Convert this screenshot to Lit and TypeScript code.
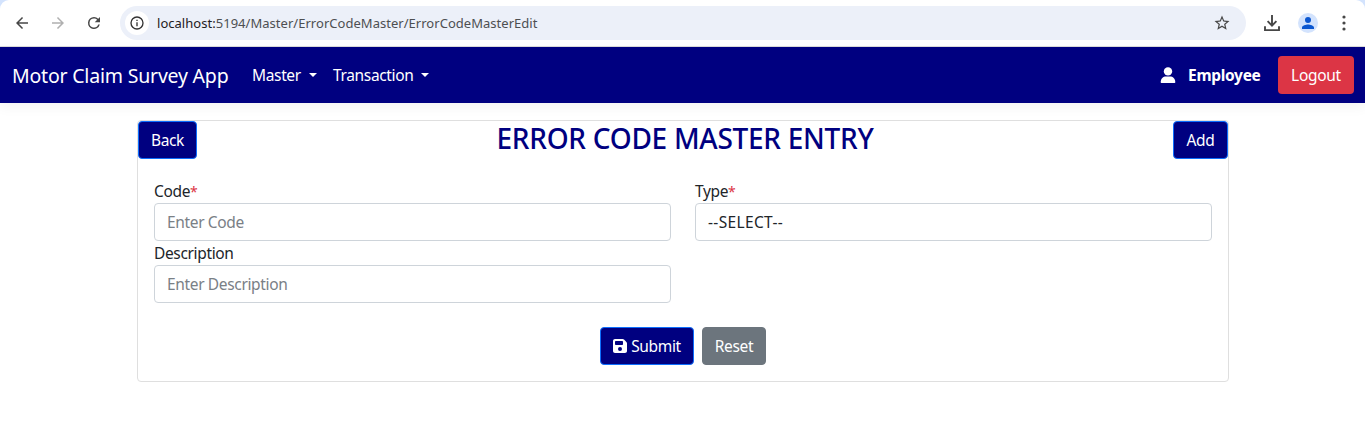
import { LitElement, html, css, svg } from "lit";
import { customElement, property } from "lit/decorators.js";

const ICONS: Record<string, { box: string; body: unknown }> = {
  back: { box: "0 0 24 24", body: svg`<path d="M20 11H7.83l5.59-5.59L12 4l-8 8 8 8 1.41-1.41L7.83 13H20v-2z"/>` },
  forward: { box: "0 0 24 24", body: svg`<path d="M12 4l-1.41 1.41L16.17 11H4v2h12.17l-5.58 5.59L12 20l8-8z"/>` },
  reload: { box: "0 0 24 24", body: svg`<path d="M17.65 6.35A7.96 7.96 0 0 0 12 4a8 8 0 1 0 7.73 10h-2.08A6 6 0 1 1 12 6c1.66 0 3.14.69 4.22 1.78L13 11h7V4l-2.35 2.35z"/>` },
  info: { box: "0 0 24 24", body: svg`<path d="M11 7h2v2h-2zm0 4h2v6h-2zm1-9a10 10 0 1 0 0 20 10 10 0 0 0 0-20zm0 18a8 8 0 1 1 0-16 8 8 0 0 1 0 16z"/>` },
  star: { box: "0 0 24 24", body: svg`<path d="M22 9.24l-7.19-.62L12 2 9.19 8.63 2 9.24l5.46 4.73L5.82 21 12 17.27 18.18 21l-1.63-7.03L22 9.24zM12 15.4l-3.76 2.27 1-4.28-3.32-2.88 4.38-.38L12 6.1l1.71 4.04 4.38.38-3.32 2.88 1 4.28L12 15.4z"/>` },
  download: { box: "0 0 18 18", body: svg`<path d="M9 1v10M4.6 7.2 9 11.6l4.4-4.4M2 12.2v3.9h14v-3.9" fill="none" stroke="currentColor" stroke-width="1.9"/>` },
  profile: { box: "0 0 24 24", body: svg`<path d="M12 12a4 4 0 1 0 0-8 4 4 0 0 0 0 8zm0 2c-2.67 0-8 1.34-8 4v2h16v-2c0-2.66-5.33-4-8-4z"/>` },
  dots: { box: "0 0 18 18", body: svg`<circle cx="9" cy="3" r="1.6"/><circle cx="9" cy="9" r="1.6"/><circle cx="9" cy="15" r="1.6"/>` },
  person: { box: "0 0 16 16", body: svg`<circle cx="8" cy="4.4" r="4.2"/><path d="M.7 15.3c0-3.7 2.6-5.7 5.2-5.7h4.2c2.6 0 5.2 2 5.2 5.7 0 .4-.3.7-.7.7H1.4c-.4 0-.7-.3-.7-.7z"/>` },
  save: { box: "0 0 448 512", body: svg`<path d="M64 32C28.700 32 0 60.700 0 96v320c0 35.300 28.700 64 64 64h320c35.300 0 64-28.700 64-64V173.300c0-17-6.700-33.300-18.700-45.300L352 50.700C340 38.700 323.700 32 306.700 32H64zm0 96c0-17.700 14.300-32 32-32h192c17.700 0 32 14.300 32 32v64c0 17.700-14.300 32-32 32H96c-17.700 0-32-14.300-32-32v-64zm160 160a64 64 0 1 1 0 128 64 64 0 1 1 0-128z"/>` },
};

@customElement("ui-icon")
export class UiIcon extends LitElement {
  @property() name = "";
  static styles = css`
    :host { display: inline-flex; flex: none; }
    svg { width: 100%; height: 100%; fill: currentColor; display: block; }
  `;
  render() {
    const icon = ICONS[this.name];
    return html`<svg viewBox=${icon.box}>${icon.body}</svg>`;
  }
}

@customElement("browser-bar")
export class BrowserBar extends LitElement {
  static styles = css`
    :host {
      display: block; box-sizing: border-box; height: 47px;
      background: #d3e3fd; color: #474747;
    }
    .bar {
      box-sizing: border-box; height: 47px; display: flex; align-items: center;
      padding: 0 12px 1px 13px; background: #fff;
      border-bottom: 1px solid #dcdcdc; border-radius: 9px 9px 0 0;
    }
    ui-icon { width: 18px; height: 18px; }
    .nav { display: flex; gap: 18px; }
    .dim { color: #b0b0b0; }
    .url {
      flex: 1; height: 34px; margin: 0 17px; border-radius: 17px; background: #ecf0f9;
      display: flex; align-items: center; padding: 0 15px 0 5px; box-sizing: border-box;
    }
    .site { width: 24px; height: 24px; border-radius: 50%; background: #fff; display: flex; align-items: center; justify-content: center; margin-right: 8px; }
    .site ui-icon { width: 16px; height: 16px; color: #333; }
    .address { flex: 1; font-size: 13px; letter-spacing: 0.03px; color: #4d4f52; white-space: nowrap; }
    .host { color: #1f2023; }
    .avatar { width: 20px; height: 20px; border-radius: 50%; background: #d3e3fd; color: #0b57d0; display: flex; align-items: center; justify-content: center; margin: 0 17px; }
    .avatar ui-icon { width: 18px; height: 18px; }
  `;
  render() {
    return html`<div class="bar">
      <div class="nav">
        <ui-icon name="back"></ui-icon>
        <ui-icon class="dim" name="forward"></ui-icon>
        <ui-icon name="reload"></ui-icon>
      </div>
      <div class="url">
        <span class="site"><ui-icon name="info"></ui-icon></span>
        <span class="address"><span class="host">localhost:</span>5194/Master/ErrorCodeMaster/ErrorCodeMasterEdit</span>
        <ui-icon name="star"></ui-icon>
      </div>
      <ui-icon name="download"></ui-icon>
      <span class="avatar"><ui-icon name="profile"></ui-icon></span>
      <ui-icon name="dots"></ui-icon>
    </div>`;
  }
}

@customElement("app-nav")
export class AppNav extends LitElement {
  static styles = css`
    :host {
      display: flex; align-items: center; box-sizing: border-box; height: 56px;
      padding: 0 11px 0 12px; background: navy; color: #fff;
      box-shadow: 0 4px 12px rgba(0, 0, 0, 0.05); white-space: nowrap;
    }
    .brand { width: 240px; padding-top: 2px; font-size: 19.5px; letter-spacing: -0.2px; }
    .item { display: flex; align-items: center; }
    .master { width: 81px; letter-spacing: -0.35px; }
    .transaction { letter-spacing: -0.35px; }
    .caret { border: 4px solid transparent; border-top-color: #fff; border-bottom: 0; margin-left: 8px; }
    .spacer { flex: 1; }
    .person { width: 16px; height: 16px; margin-right: 12px; }
    .user { font-weight: 700; width: 90px; letter-spacing: -0.3px; }
    .logout {
      width: 76px; height: 38px; border: 0; border-radius: 4px; padding: 0;
      background: #dc3545; color: #fff; font: inherit; letter-spacing: -0.3px;
    }
  `;
  render() {
    return html`
      <span class="brand">Motor Claim Survey App</span>
      <span class="item master">Master<i class="caret"></i></span>
      <span class="item transaction">Transaction<i class="caret"></i></span>
      <span class="spacer"></span>
      <ui-icon class="person" name="person"></ui-icon>
      <span class="user">Employee</span>
      <button class="logout">Logout</button>
    `;
  }
}

@customElement("app-root")
export class AppRoot extends LitElement {
  static styles = css`
    :host {
      display: block; height: 431px; overflow: hidden; background: #fff; color: #212529;
      font: 15.5px/24px "Noto Sans", "Open Sans", sans-serif;
    }
    .card {
      box-sizing: border-box; width: 1092px; height: 262px; margin: 17px 0 0 137px;
      border: 1px solid #dfdfdf; border-radius: 4px;
    }
    .head { display: flex; justify-content: space-between; height: 38px; }
    h1 {
      margin: 0; font-size: 28px; line-height: 34px; font-weight: 500; color: navy;
      letter-spacing: -0.27px; white-space: nowrap;
    }
    button {
      box-sizing: border-box; height: 38px; padding: 0; border-radius: 4px; font: inherit;
      letter-spacing: -0.35px; color: #fff; background: navy; border: 1px solid #0d6efd;
    }
    .back { width: 59px; }
    .add { width: 55px; }
    .form { display: grid; grid-template-columns: 517px 517px; column-gap: 24px; padding: 20px 16px 0; }
    label { display: block; height: 24px; letter-spacing: -0.35px; }
    .req { color: #dc3545; font-size: 14px; line-height: 1; }
    input, .select {
      box-sizing: border-box; display: block; width: 100%; height: 38px; padding: 0 12px;
      border: 1px solid #ced4da; border-radius: 4px; background: #fff; outline: 0;
      font: inherit; letter-spacing: -0.35px; color: #212529; line-height: 36px;
    }
    .select { letter-spacing: 0.35px; }
    input::placeholder { color: #7a8086; opacity: 1; }
    .actions { display: flex; gap: 8px; padding: 24px 0 0 462px; }
    .submit { width: 94px; display: flex; align-items: center; justify-content: center; gap: 4px; }
    .submit ui-icon { width: 14px; height: 16px; }
    .reset { width: 64px; background: #6c757d; border-color: #6c757d; }
  `;
  render() {
    return html`
      <browser-bar></browser-bar>
      <app-nav></app-nav>
      <main class="card">
        <div class="head">
          <button class="back">Back</button>
          <h1>ERROR CODE MASTER ENTRY</h1>
          <button class="add">Add</button>
        </div>
        <div class="form">
          <div><label>Code<span class="req">*</span></label><input placeholder="Enter Code" /></div>
          <div><label>Type<span class="req">*</span></label><div class="select">--SELECT--</div></div>
          <div><label>Description</label><input placeholder="Enter Description" /></div>
        </div>
        <div class="actions">
          <button class="submit"><ui-icon name="save"></ui-icon>Submit</button>
          <button class="reset">Reset</button>
        </div>
      </main>
    `;
  }
}
